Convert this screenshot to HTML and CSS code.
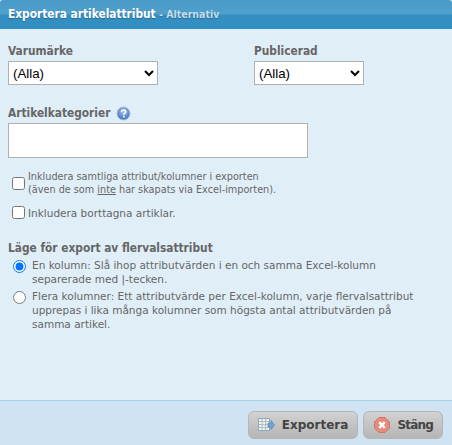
FILE: index.html
```html
<!DOCTYPE html>
<html lang="sv">
<head>
<meta charset="utf-8">
<title>Exportera artikelattribut</title>
<link rel="stylesheet" href="styles.css">
</head>
<body>
<div class="dialog">
  <header class="titlebar"><span class="title">Exportera artikelattribut</span><span class="subtitle"> - Alternativ</span></header>
  <main class="content">
    <div class="selects">
      <div class="field field-brand">
        <label class="label">Varumärke</label>
        <select class="select select-brand"><option>(Alla)</option></select>
      </div>
      <div class="field">
        <label class="label">Publicerad</label>
        <select class="select select-pub"><option>(Alla)</option></select>
      </div>
    </div>
    <div class="category">
      <div class="label-row">
        <label class="label">Artikelkategorier</label>
        <svg class="help" width="15" height="15" viewBox="0 0 15 15"><defs><radialGradient id="h" cx="50%" cy="35%" r="65%"><stop offset="0" stop-color="#a9c4ee"/><stop offset="1" stop-color="#3f6fb8"/></radialGradient></defs><circle cx="7.5" cy="7.500" r="6.500" fill="url(#h)" stroke="#a3bbdc"/><path d="M5.400 5.800c.2-1.300 1.100-1.900 2.200-1.900 1.200 0 2.100.7 2.100 1.800 0 1.500-1.800 1.500-1.800 3" fill="none" stroke="#fff" stroke-width="1.500"/><rect x="7" y="9.800" width="1.600" height="1.600" fill="#fff"/></svg>
      </div>
      <div class="picker"></div>
    </div>
    <label class="check check-first"><input type="checkbox"><span>Inkludera samtliga attribut/kolumner i exporten<br>(även de som <u>inte</u> har skapats via Excel-importen).</span></label>
    <label class="check check-second"><input type="checkbox"><span>Inkludera borttagna artiklar.</span></label>
    <div class="label mode-title">Läge för export av flervalsattribut</div>
    <label class="radio"><input type="radio" name="mode" checked><span>En kolumn: Slå ihop attributvärden i en och samma Excel-kolumn<br>separerade med |-tecken.</span></label>
    <label class="radio"><input type="radio" name="mode"><span>Flera kolumner: Ett attributvärde per Excel-kolumn, varje flervalsattribut<br>upprepas i lika många kolumner som högsta antal attributvärden på<br>samma artikel.</span></label>
  </main>
  <footer class="footer">
    <button class="btn btn-export"><svg width="17" height="16" viewBox="0 0 17 16"><rect x=".5" y="1.500" width="11" height="12" fill="#f4f1dc" stroke="#8fa8c4"/><path d="M.5 4.500h11M4 2v11M7.700 2v11M1 7.500h10M1 10.500h10" stroke="#a9bcd2"/><path d="M10 6h3V3.500L16.500 8 13 12.500V10h-3z" fill="#6ea6dc" stroke="#4a7fb5" stroke-width=".6"/></svg>Exportera</button>
    <button class="btn btn-close"><svg width="16" height="16" viewBox="0 0 16 16"><path d="M5 .5h6L15.500 5v6L11 15.500H5L.5 11V5z" fill="#e58a7d" stroke="#cf7468"/><path d="M5.200 5.200l5.600 5.600M10.800 5.200l-5.600 5.600" stroke="#fff" stroke-width="2.400"/></svg>Stäng</button>
  </footer>
</div>
</body>
</html>
```
FILE: styles.css
```css
* { box-sizing: border-box; }
html, body { margin: 0; height: 100%; }
body { font-family: "DejaVu Sans", Verdana, sans-serif; font-size: 11px; color: #666; background: #e0eef8; }
.dialog { width: 452px; height: 445px; display: flex; flex-direction: column; }
.titlebar { height: 29px; flex: none; padding: 7px 8px 0; font-size: 11.800px; font-stretch: condensed; line-height: 15px; font-weight: bold; color: #fff; border-radius: 3px 3px 0 0; background: linear-gradient(#4a9ac9 0, #50a0cc 14px, #338fc2 15px, #338fc2 100%); text-shadow: 0 1px 1px rgba(0,0,0,.25); }
.subtitle { font-size: 10.500px; color: #c3dcec; }
.content { flex: 1; padding: 15px 8px 0; }
.selects { display: flex; }
.field-brand { width: 246px; }
.field { display: flex; flex-direction: column; }
.label { font-size: 11.800px; font-stretch: condensed; line-height: 15px; font-weight: bold; color: #666; }
.select { height: 24px; margin-top: 2px; padding: 0; background: #fff; border: 1px solid #b0b0b0; border-radius: 0; font-family: "Liberation Sans", Arial, sans-serif; font-size: 13.300px; color: #000; }
.select-brand { width: 150px; }
.select-pub { width: 110px; }
.category { margin-top: 20px; }
.label-row { display: flex; align-items: center; gap: 6px; height: 17px; }
.picker { width: 300px; height: 35px; margin-top: 1px; background: #fff; border: 1px solid #b0b0b0; }
.check { display: flex; align-items: center; font-size: 9.700px; line-height: 13px; }
.check input { width: 13px; height: 13px; margin: 0 3px 0 4px; flex: none; }
.check-first { margin-top: 12px; }
.check-second { margin-top: 10px; font-size: 10.500px; }
.check-second input { margin-bottom: 2px; }
.mode-title { margin-top: 20px; }
.radio { display: flex; align-items: flex-start; font-size: 10.500px; line-height: 14px; margin-top: 2px; }
.radio + .radio { margin-top: 3px; }
.radio input { width: 13px; height: 13px; margin: 2px 6px 0 5px; flex: none; }
.footer { height: 45px; flex: none; display: flex; justify-content: flex-end; gap: 5px; padding: 10px 9px 0 0; background: #cfe3f3; border-top: 1px solid #a6cfe8; }
.btn { height: 28px; display: flex; align-items: center; gap: 7px; padding: 0 9px; border: 1px solid #b5b5b5; border-radius: 6px; background: linear-gradient(#d2d2d2, #b5b5b5); font-family: "DejaVu Sans", Verdana, sans-serif; font-size: 12px; font-weight: bold; color: #444; }
.btn-close { padding-left: 10px; letter-spacing: -.8px; }
```
